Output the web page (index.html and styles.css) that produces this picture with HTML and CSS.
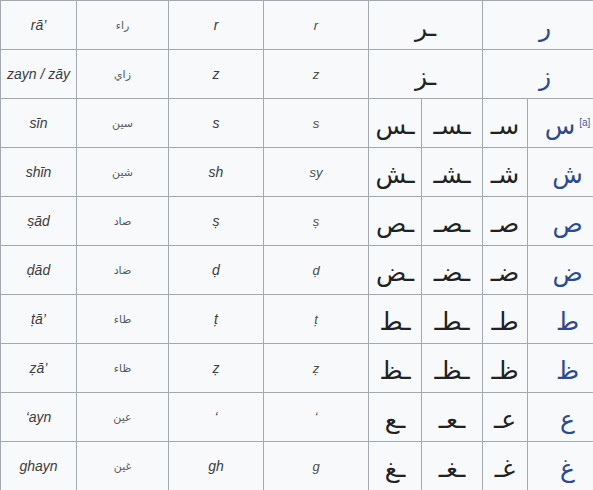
FILE: index.html
```html
<!DOCTYPE html>
<html lang="en">
<head>
<meta charset="utf-8">
<title>Arabic letters</title>
<link rel="stylesheet" href="styles.css">
</head>
<body>
<table class="wikitable">
  <colgroup>
    <col class="c1"><col class="c2"><col class="c3"><col class="c4">
    <col class="c5"><col class="c6"><col class="c7"><col class="c8">
  </colgroup>
  <tbody>
    <tr>
      <td class="name">rā’</td><td class="aname" lang="ar">راء</td><td class="tr">r</td><td class="tr2">r</td>
      <td class="form" colspan="2" lang="ar">ـر</td><td class="form iso" colspan="2" lang="ar">ر</td>
    </tr>
    <tr>
      <td class="name">zayn / zāy</td><td class="aname" lang="ar">زاي</td><td class="tr">z</td><td class="tr2">z</td>
      <td class="form" colspan="2" lang="ar">ـز</td><td class="form iso" colspan="2" lang="ar">ز</td>
    </tr>
    <tr>
      <td class="name">sīn</td><td class="aname" lang="ar">سين</td><td class="tr">s</td><td class="tr2">s</td>
      <td class="form" lang="ar">ـس</td><td class="form" lang="ar">ـسـ</td><td class="form" lang="ar">سـ</td><td class="form iso" lang="ar"><span>س</span><sup class="ref">[a]</sup></td>
    </tr>
    <tr>
      <td class="name">shīn</td><td class="aname" lang="ar">شين</td><td class="tr">sh</td><td class="tr2">sy</td>
      <td class="form" lang="ar">ـش</td><td class="form" lang="ar">ـشـ</td><td class="form" lang="ar">شـ</td><td class="form iso" lang="ar">ش</td>
    </tr>
    <tr>
      <td class="name">ṣād</td><td class="aname" lang="ar">صاد</td><td class="tr">ṣ</td><td class="tr2">ṣ</td>
      <td class="form" lang="ar">ـص</td><td class="form" lang="ar">ـصـ</td><td class="form" lang="ar">صـ</td><td class="form iso" lang="ar">ص</td>
    </tr>
    <tr>
      <td class="name">ḍād</td><td class="aname" lang="ar">ضاد</td><td class="tr">ḍ</td><td class="tr2">ḍ</td>
      <td class="form" lang="ar">ـض</td><td class="form" lang="ar">ـضـ</td><td class="form" lang="ar">ضـ</td><td class="form iso" lang="ar">ض</td>
    </tr>
    <tr>
      <td class="name">ṭā’</td><td class="aname" lang="ar">طاء</td><td class="tr">ṭ</td><td class="tr2">ṭ</td>
      <td class="form" lang="ar">ـط</td><td class="form" lang="ar">ـطـ</td><td class="form" lang="ar">طـ</td><td class="form iso" lang="ar">ط</td>
    </tr>
    <tr>
      <td class="name">ẓā’</td><td class="aname" lang="ar">ظاء</td><td class="tr">ẓ</td><td class="tr2">ẓ</td>
      <td class="form" lang="ar">ـظ</td><td class="form" lang="ar">ـظـ</td><td class="form" lang="ar">ظـ</td><td class="form iso" lang="ar">ظ</td>
    </tr>
    <tr>
      <td class="name">‘ayn</td><td class="aname" lang="ar">عين</td><td class="tr">‘</td><td class="tr2">ʻ</td>
      <td class="form" lang="ar">ـع</td><td class="form" lang="ar">ـعـ</td><td class="form" lang="ar">عـ</td><td class="form iso" lang="ar">ع</td>
    </tr>
    <tr>
      <td class="name">ghayn</td><td class="aname" lang="ar">غين</td><td class="tr">gh</td><td class="tr2">g</td>
      <td class="form" lang="ar">ـغ</td><td class="form" lang="ar">ـغـ</td><td class="form" lang="ar">غـ</td><td class="form iso" lang="ar">غ</td>
    </tr>
  </tbody>
</table>
</body>
</html>
```

FILE: styles.css
```css
html, body {
  margin: 0;
  padding: 0;
  overflow: hidden;
  background: #ffffff;
}

body {
  font-family: "Liberation Sans", Arial, sans-serif;
  font-size: 14px;
  color: #202122;
}

.wikitable {
  border-collapse: collapse;
  table-layout: fixed;
  width: 607px;
  background: #f8f9fa;
  color: #202122;
}

.c1 { width: 76px; }
.c2 { width: 92px; }
.c3 { width: 95px; }
.c4 { width: 105px; }
.c5 { width: 53px; }
.c6 { width: 61px; }
.c7 { width: 45px; }
.c8 { width: 80px; }

.wikitable td {
  border: 1px solid #a2a9b1;
  padding: 0 2px;
  height: 49px;
  box-sizing: border-box;
  text-align: center;
  vertical-align: middle;
  white-space: nowrap;
}

.name {
  font-style: italic;
  font-size: 14px;
  color: #3a3c3f;
}

.aname {
  font-family: "DejaVu Sans", sans-serif;
  font-size: 11px;
  color: #54595d;
}

.tr {
  font-style: italic;
  font-size: 14px;
  color: #3a3c3f;
}

.tr2 {
  font-style: italic;
  font-size: 13px;
  color: #4a4d50;
}

.wikitable .form {
  font-family: "DejaVu Sans", sans-serif;
  font-size: 25px;
  line-height: 30px;
  padding-top: 6px;
  color: #202122;
}

.wikitable .iso {
  color: #2a4b8d;
}

.ref {
  font-family: "Liberation Sans", Arial, sans-serif;
  font-size: 10px;
  line-height: 10px;
  color: #4a5f90;
  vertical-align: 8px;
  margin-left: 4px;
}
```
